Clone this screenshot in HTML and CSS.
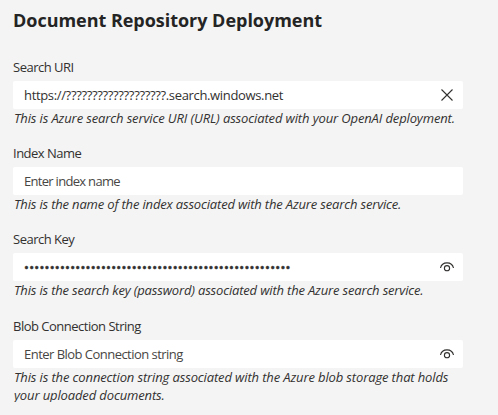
FILE: index.html
```html
<!DOCTYPE html>
<html lang="en">
<head>
    <meta charset="UTF-8">
    <meta name="viewport" content="width=device-width, initial-scale=1.0">
    <title>Document Repository Deployment</title>
    <link rel="stylesheet" href="styles.css">
</head>
<body>

<h1>Document Repository Deployment</h1>

<form>
    <div class="form-group">
        <label for="search-uri">Search URI</label>
        <div class="field">
            <input type="text" id="search-uri" class="uri" value="https://???????????????????.search.windows.net">
            <svg class="icon" viewBox="0 0 16 16"><path d="M2.5 2.5L13.5 13.5M13.5 2.5L2.5 13.5"/></svg>
        </div>
        <p class="hint hint-wide">This is Azure search service URI (URL) associated with your OpenAI deployment.</p>
    </div>

    <div class="form-group">
        <label for="index-name">Index Name</label>
        <div class="field">
            <input type="text" id="index-name" placeholder="Enter index name">
        </div>
        <p class="hint">This is the name of the index associated with the Azure search service.</p>
    </div>

    <div class="form-group">
        <label for="search-key">Search Key</label>
        <div class="field">
            <input type="text" id="search-key" class="secret" value="••••••••••••••••••••••••••••••••••••••••••••••••••••">
            <svg class="icon" viewBox="0 0 16 16"><path d="M1.5 9C3 2.2 13 2.2 14.5 9"/><circle cx="8" cy="9.2" r="2.6"/></svg>
        </div>
        <p class="hint">This is the search key (password) associated with the Azure search service.</p>
    </div>

    <div class="form-group">
        <label for="blob-connection">Blob Connection String</label>
        <div class="field">
            <input type="text" id="blob-connection" class="blob" placeholder="Enter Blob Connection string">
            <svg class="icon" viewBox="0 0 16 16"><path d="M1.5 9C3 2.2 13 2.2 14.5 9"/><circle cx="8" cy="9.2" r="2.6"/></svg>
        </div>
        <p class="hint hint-wide">This is the connection string associated with the Azure blob storage that holds your uploaded documents.</p>
    </div>
</form>

</body>
</html>
```
FILE: styles.css
```css
body {
    font-family: "Open Sans", "Noto Sans", sans-serif;
    font-size: 13px;
    margin: 0;
    padding: 8px 35px 0 13px;
    background-color: #f4f4f4;
    color: #323130;
}
h1 {
    margin: 0;
    font-size: 18px;
    line-height: 24px;
    font-weight: 700;
    letter-spacing: -0.03px;
    color: #242424;
}
form {
    margin-top: 25px;
}
.form-group {
    height: 86.2px;
}
.form-group label {
    display: block;
    height: 24px;
    box-sizing: border-box;
    line-height: 21px;
    letter-spacing: -0.5px;
}
.field {
    display: flex;
    align-items: center;
    height: 28px;
    padding: 0 8px 0 11px;
    background-color: #fff;
    border-radius: 2px;
}
.field input {
    flex: 1;
    min-width: 0;
    padding: 0;
    border: none;
    outline: none;
    background: none;
    font: inherit;
    letter-spacing: -0.7px;
    color: #323130;
}
.field input::placeholder {
    color: #484644;
    opacity: 1;
}
.field .uri {
    padding-bottom: 1px;
    letter-spacing: -0.34px;
}
.field .secret {
    letter-spacing: 0.24px;
    -webkit-text-stroke: 0.5px #242424;
}
.field .blob {
    letter-spacing: -0.53px;
}
.icon {
    width: 16px;
    height: 16px;
    fill: none;
    stroke: #323130;
    stroke-width: 1.1;
}
.hint {
    margin: 0;
    padding-left: 1px;
    line-height: 18px;
    font-style: italic;
    letter-spacing: -0.17px;
}
.hint-wide {
    letter-spacing: -0.13px;
}
```
